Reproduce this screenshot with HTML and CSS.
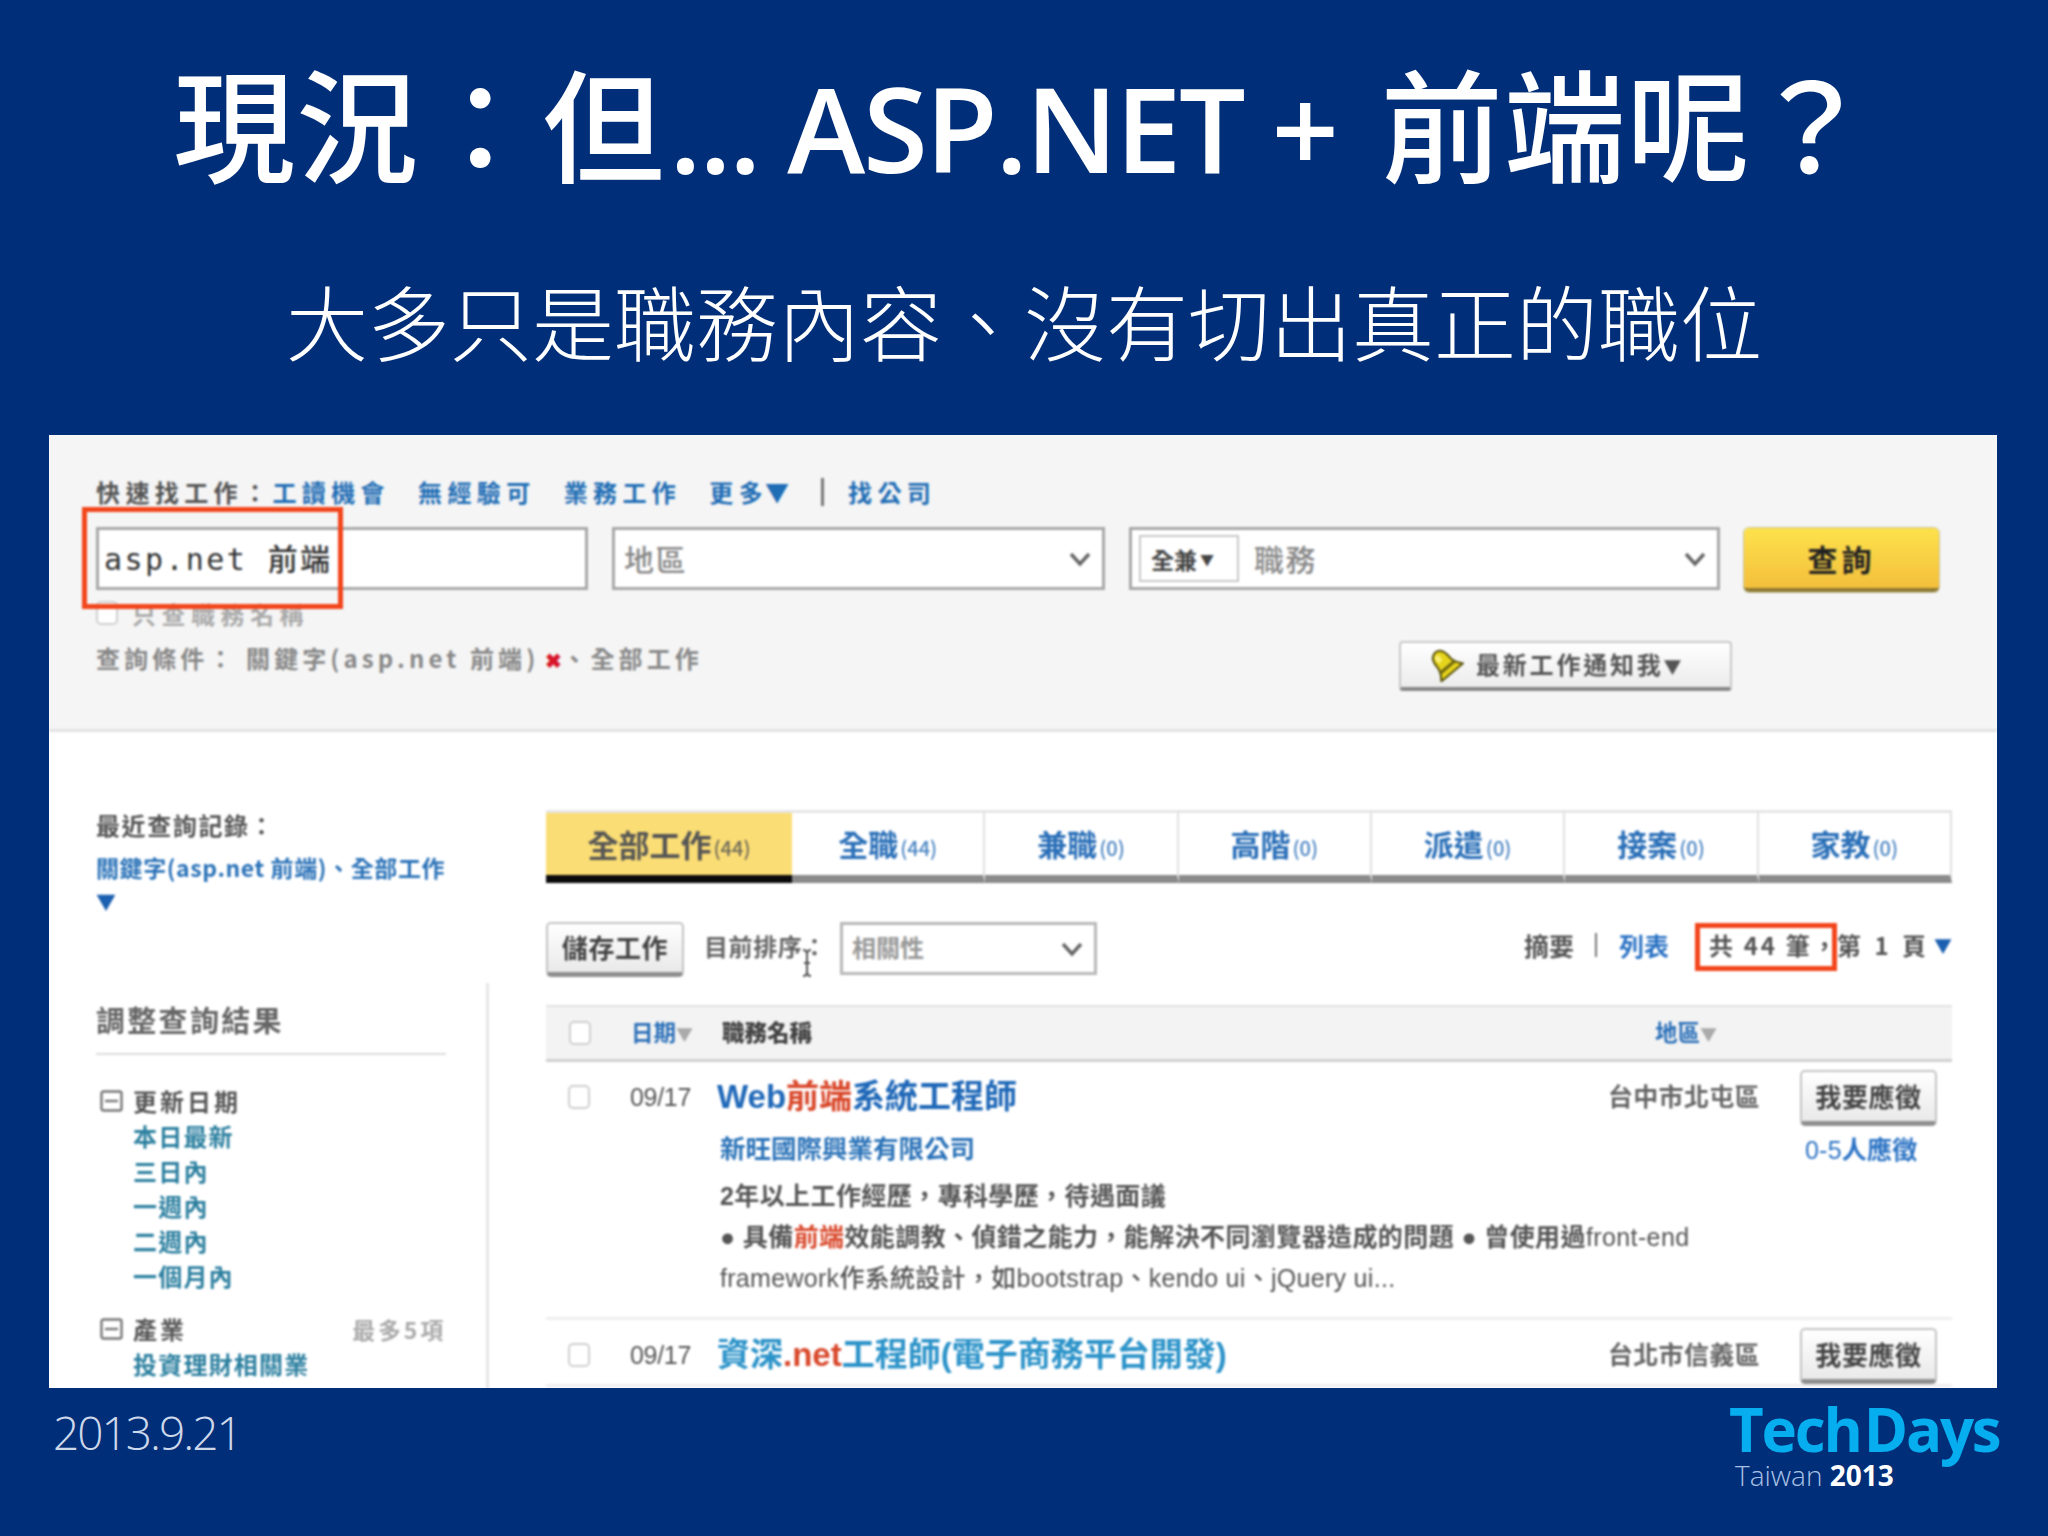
FILE: index.html
```html
<!DOCTYPE html>
<html lang="zh-Hant">
<head>
<meta charset="utf-8">
<title>TechDays Taiwan 2013</title>
<link rel="stylesheet" href="styles.css">
</head>
<body>
<main class="slide">
  <h1 class="title">現況：但<span class="latin">... ASP.NET + </span>前端呢？</h1>
  <h2 class="subtitle">大多只是職務內容、沒有切出真正的職位</h2>

  <section class="panel">
    <div class="shot">
      <header class="search">
        <div class="quick">
          <span>快速找工作：</span><a class="q1">工讀機會</a><a class="q1">無經驗可</a><a class="q1">業務工作</a><a class="q1">更多<em class="qtri">▼</em></a><i class="vbar"></i><a>找公司</a>
        </div>
        <div class="fields">
          <div class="field f1"><span class="typed">asp.net 前端</span><b class="mark mark-a"></b></div>
          <div class="field f2"><span class="ph">地區</span><svg class="chev" viewBox="0 0 24 16"><polyline points="3,3 12,13 21,3"/></svg></div>
          <div class="field f3"><span class="mini">全兼<em>▼</em></span><span class="ph">職務</span><svg class="chev" viewBox="0 0 24 16"><polyline points="3,3 12,13 21,3"/></svg></div>
          <button class="go">查詢</button>
        </div>
        <div class="only"><i class="cb"></i><span>只查職務名稱</span></div>
        <div class="cond">
          <div class="cond-text">查詢條件：&nbsp;關鍵字(asp.net 前端)<b>✖</b>、全部工作</div>
          <button class="notify">
            <svg class="bell" viewBox="0 0 36 34"><g transform="translate(17 16) rotate(-40)"><path d="M0 -15 C-7 -15 -8 -8 -8 -2 C-8 4 -11 7 -14 11 H14 C11 7 8 4 8 -2 C8 -8 7 -15 0 -15Z" fill="#e6d31c" stroke="#59520c" stroke-width="2"/><path d="M-10 4 H10" stroke="#6d6610" stroke-width="3"/><ellipse cx="-2" cy="-8" rx="3" ry="4" fill="#f8ee70"/></g></svg>
            <span>最新工作通知我<em class="tri">▼</em></span>
          </button>
        </div>
      </header>

      <div class="content">
        <aside class="side">
          <div class="recent-t">最近查詢記錄：</div>
          <a class="recent-l">關鍵字(asp.net 前端)、全部工作</a>
          <a class="recent-m">▼</a>
          <div class="filters">
            <div class="f-title">調整查詢結果</div>
            <div class="g-head"><svg class="minus" viewBox="0 0 23 22"><rect x="1.5" y="1.5" width="20" height="19" rx="2"/><line x1="5" y1="11" x2="18" y2="11"/></svg><span>更新日期</span></div>
            <a class="g-item">本日最新</a>
            <a class="g-item">三日內</a>
            <a class="g-item">一週內</a>
            <a class="g-item">二週內</a>
            <a class="g-item">一個月內</a>
            <div class="g-head g2"><svg class="minus" viewBox="0 0 23 22"><rect x="1.5" y="1.5" width="20" height="19" rx="2"/><line x1="5" y1="11" x2="18" y2="11"/></svg><span>產業</span><small>最多5項</small></div>
            <a class="g-item">投資理財相關業</a>
          </div>
        </aside>

        <div class="main">
          <nav class="tabs">
            <div class="tab on">全部工作<small>(44)</small></div>
            <div class="tab">全職<small>(44)</small></div>
            <div class="tab">兼職<small>(0)</small></div>
            <div class="tab">高階<small>(0)</small></div>
            <div class="tab">派遣<small>(0)</small></div>
            <div class="tab">接案<small>(0)</small></div>
            <div class="tab">家教<small>(0)</small></div>
          </nav>

          <div class="tools">
            <button class="btn save">儲存工作</button>
            <span class="sort">目前排序：<svg class="ibeam" viewBox="0 0 12 28"><path d="M2 1 Q6 1 6 5 V23 Q6 27 2 27 M10 1 Q6 1 6 5 M6 23 Q6 27 10 27 M3 14 H9"/></svg></span>
            <div class="sel"><span>相關性</span><svg class="chev" viewBox="0 0 24 16"><polyline points="3,3 12,13 21,3"/></svg></div>
            <div class="pager">
              <span class="sum">摘要</span><i class="vbar thin"></i><a class="sum">列表</a>
              <span class="count">共 44 筆，<b class="mark mark-b"></b></span><span class="page">第 1 頁</span><a class="more">▼</a>
            </div>
          </div>

          <div class="thead">
            <i class="cb"></i>
            <span class="th-date"><a>日期</a><em>▼</em></span>
            <strong class="th-name">職務名稱</strong>
            <span class="th-area"><a>地區</a><em>▼</em></span>
          </div>

          <article class="row first">
            <i class="cb"></i>
            <time class="date">09/17</time>
            <div class="job">
              <a class="job-t">Web<mark>前端</mark>系統工程師</a>
              <a class="co">新旺國際興業有限公司</a>
              <p class="d l1">2年以上工作經歷，專科學歷，待遇面議</p>
              <p class="d l2">● 具備<mark>前端</mark>效能調教、偵錯之能力，能解決不同瀏覽器造成的問題 ● 曾使用過<span class="r">front-end</span></p>
              <p class="d l3">framework作系統設計，如bootstrap、kendo ui、jQuery ui...</p>
            </div>
            <div class="loc">台中市北屯區</div>
            <div class="act"><button class="btn apply">我要應徵</button><a class="cnt"><span class="r">0-5</span>人應徵</a></div>
          </article>

          <article class="row">
            <i class="cb"></i>
            <time class="date">09/17</time>
            <div class="job"><a class="job-t light">資深<mark>.net</mark>工程師(電子商務平台開發)</a></div>
            <div class="loc">台北市信義區</div>
            <div class="act"><button class="btn apply">我要應徵</button></div>
          </article>
        </div>
      </div>
    </div>
  </section>

  <footer class="foot">
    <div class="when">2013.9.21</div>
    <div class="logo">
      <div class="td">Tech<span>Days</span></div>
      <div class="tw">Taiwan <b>2013</b></div>
    </div>
  </footer>
</main>
</body>
</html>
```

FILE: styles.css
```css
* { box-sizing: border-box; }
html, body { margin: 0; padding: 0; }
body { background: #012e78; font-family: "Noto Sans CJK TC", sans-serif; }
a { color: inherit; text-decoration: none; }
i, em { font-style: normal; }
button { font-family: inherit; padding: 0; cursor: default; }

.slide {
  width: 2048px; height: 1536px; overflow: hidden;
  background: #012e78; color: #fff;
  display: flex; flex-direction: column;
}
.title {
  margin: 0; height: 250px; line-height: 252px; text-align: center;
  font-family: "Open Sans", "Noto Sans CJK TC", sans-serif;
  font-weight: 500; font-size: 122px; white-space: nowrap; letter-spacing: 1px;
  padding-right: 2px;
}
.latin { font-weight: 600; font-size: 118px; letter-spacing: -2.4px; margin: 0 16px 0 4px; }
.subtitle {
  margin: 0; height: 185px; line-height: 140px; text-align: center;
  font-weight: 300; font-size: 82px; letter-spacing: 0;
  white-space: nowrap;
}

/* embedded screenshot */
.panel { margin-left: 49px; width: 1948px; height: 953px; overflow: hidden; background: #fff; flex: none; }
.shot { height: 100%; filter: blur(0.9px); color: #333; font-size: 24px; }

.search { height: 297px; background: #f5f5f5; border-bottom: 3px solid #e2e2e2; padding: 41px 0 0 47px; }
.quick { display: flex; height: 32px; line-height: 32px; align-items: center; font-size: 24px; letter-spacing: 5.4px; color: #555; white-space: nowrap; font-weight: 700; }
.quick a { color: #1f6db5; }
.quick .q1 { margin-right: 28px; }
.quick .q1:nth-of-type(4) { margin-right: 32px; }
.qtri { margin-left: -3px; letter-spacing: 0; }
.vbar { display: inline-block; width: 3px; height: 28px; background: #777; margin-right: 24px; }

.fields { display: flex; gap: 24px; margin-top: 19px; }
.field { position: relative; height: 63px; background: #fff; border: 3px solid #a8a8a8; display: flex; align-items: center; }
.f1 { width: 492px; padding-left: 5px; }
.f2 { width: 493px; padding-left: 9px; }
.f3 { width: 591px; padding-left: 7px; }
.typed { font-family: "DejaVu Sans Mono", "Noto Sans CJK TC", monospace; font-size: 30px; color: #333; letter-spacing: 2.4px; white-space: nowrap; font-weight: 500; margin-top: -3px; }
.ph { font-size: 30px; color: #8a8a8a; letter-spacing: 1.5px; font-weight: 500; margin-top: -2px; }
.mini { display: flex; align-items: center; width: 100px; height: 47px; border: 2px solid #c9c9c9; padding-left: 10px; font-size: 23px; font-weight: 700; color: #444; margin-right: 15px; }
.mini em { font-size: 14px; margin-left: 3px; }
.chev { position: absolute; right: 10px; top: 50%; margin-top: -9px; width: 24px; height: 18px; fill: none; stroke: #666; stroke-width: 3.5; }
.go { width: 195px; height: 64px; margin-top: 1px; border: 0; border-bottom: 4px solid #8f7a33; border-radius: 5px; background: linear-gradient(#fde24c, #f4bf3c); box-shadow: 0 0 0 1px #c9c4a6; font-size: 30px; font-weight: 700; color: #222; letter-spacing: 4px; }

.mark { position: absolute; border: 5px solid #f2451b; display: block; }
.mark-a { left: -17px; top: -23px; width: 261px; height: 102px; }
.mark-b { left: -14px; top: -4px; width: 142px; height: 48px; }

.only { display: flex; align-items: center; gap: 14px; height: 30px; margin-top: 6px; color: #aaa; font-size: 24px; letter-spacing: 5.5px; font-weight: 700; }
.cb { display: block; width: 22px; height: 24px; background: #fff; border: 2px solid #cfcfcf; border-radius: 5px; flex: none; }
.cond { display: flex; height: 50px; margin-top: 13px; }
.cond-text { width: 1303px; padding-top: 2px; color: #888; line-height: 30px; font-size: 24px; letter-spacing: 4.1px; white-space: nowrap; font-weight: 700; }
.cond-text b { color: #d8142a; font-size: 20px; margin: 0 0 0 6px; letter-spacing: 0; }
.notify { width: 333px; height: 50px; display: flex; align-items: center; background: linear-gradient(#fff, #ececec); border: 2px solid #c8c8c8; border-bottom: 4px solid #888; border-radius: 4px; padding-left: 27px; font-size: 24px; font-weight: 700; color: #555; letter-spacing: 2.8px; white-space: nowrap; }
.notify span { margin-top: -3px; }
.tri { font-size: 18px; }
.bell { width: 36px; height: 34px; margin-right: 12px; flex: none; }

.content { display: grid; grid-template-columns: 497px 1406px; height: 656px; }
.side { padding: 78px 0 0 47px; }
.recent-t { line-height: 32px; font-size: 24px; color: #555; font-weight: 700; letter-spacing: 1.6px; margin-top: -1px; }
.recent-l { display: block; margin-top: 10px; line-height: 32px; font-size: 23px; color: #2a72b8; white-space: nowrap; font-weight: 700; letter-spacing: 0.6px; }
.recent-m { display: block; margin-top: 3px; line-height: 32px; font-size: 20px; color: #1b5fb0; }
.filters { width: 393px; margin-top: 65px; height: 410px; border-right: 3px solid #e6e6e6; }
.f-title { width: 350px; height: 72px; padding-top: 17px; line-height: 38px; font-size: 29px; letter-spacing: 2.3px; color: #666; border-bottom: 2px solid #dcdcdc; font-weight: 700; }
.g-head { display: flex; align-items: center; width: 350px; height: 35px; margin-top: 28px; font-size: 24px; color: #555; letter-spacing: 3px; font-weight: 700; }
.g-head.g2 { margin-top: 18px; }
.g-head small { margin-left: auto; color: #aaa; font-size: 23px; letter-spacing: 2.8px; }
.minus { width: 23px; height: 22px; margin: 0 10px 0 4px; flex: none; fill: none; stroke: #777; stroke-width: 2.4; }
.g-item { display: block; height: 35px; line-height: 35px; padding-left: 37px; font-size: 24px; letter-spacing: 1.2px; color: #2b7f9f; font-weight: 700; }

.main { padding-top: 78px; }
.tabs { display: flex; height: 73px; }
.tab { flex: 1; display: flex; align-items: center; justify-content: center; font-size: 30px; font-weight: 700; letter-spacing: 0; color: #2a6fb8; background: #fff; border-top: 3px solid #e6e6e6; border-right: 2px solid #e0e0e0; border-bottom: 8px solid #8a8a8a; padding-bottom: 2px; }
.tab small { font-size: 20px; margin: 8px 0 0 2px; opacity: .85; font-weight: 500; }
.tab.on { flex: none; width: 246px; background: #fbdd75; color: #555; border-bottom-color: #0a0a0a; border-right: 0; font-size: 31px; }

.tools { display: flex; align-items: flex-start; height: 55px; margin-top: 39px; }
.btn { background: linear-gradient(#fff, #e9e9e9); border: 2px solid #c4c4c4; border-bottom: 5px solid #8f8f8f; border-radius: 5px; font-size: 26px; letter-spacing: 0.6px; font-weight: 700; color: #444; padding-bottom: 3px; }
.save { width: 138px; height: 55px; }
.sort { position: relative; margin-left: 20px; width: 136px; line-height: 48px; font-size: 24px; color: #666; white-space: nowrap; letter-spacing: 0.6px; font-weight: 700; }
.ibeam { position: absolute; left: 97px; top: 27px; width: 12px; height: 28px; fill: none; stroke: #555; stroke-width: 2; }
.sel { position: relative; width: 257px; height: 53px; background: #fff; border: 3px solid #b8b8b8; padding-left: 9px; line-height: 44px; font-size: 24px; color: #999; font-weight: 700; }
.pager { margin-left: auto; display: flex; align-items: center; height: 45px; font-size: 24px; color: #555; font-weight: 700; }
.pager a { color: #2a72c4; }
.sum { font-size: 25px; }
.vbar.thin { width: 2px; height: 24px; margin: 0 22px 0 21px; background: #777; }
.count { position: relative; margin-left: 40px; width: 128px; letter-spacing: 2.7px; white-space: nowrap; }
.page { width: 97px; letter-spacing: 4px; white-space: nowrap; }
.pager .more { color: #1b5fb0; font-size: 18px; }

.thead { display: flex; align-items: center; height: 57px; margin-top: 28px; background: #f3f3f3; border-top: 2px solid #e2e2e2; border-bottom: 3px solid #d0d0d0; padding: 0 0 4px 23px; font-size: 22.5px; font-weight: 700; }
.thead .cb { margin-top: 4px; }
.th-date { margin-left: 40px; width: 91px; color: #2a6fb8; white-space: nowrap; }
.thead em { color: #aaa; font-size: 17px; font-weight: 400; }
.th-name { color: #444; width: 933px; }
.th-area { color: #2a6fb8; white-space: nowrap; }

.row { display: grid; grid-template-columns: 84px 87px 891px 192px 152px; padding-top: 8px; border-bottom: 3px solid #eeeeee; }
.row.first { height: 258px; }
.row > .cb { margin: 15px 0 0 22px; }
.date { line-height: 54px; font-family: "Liberation Sans", sans-serif; font-size: 25px; color: #555; letter-spacing: -0.3px; }
.job-t { display: block; width: fit-content; line-height: 54px; height: 56px; font-size: 33px; font-weight: 700; color: #1f68b8; white-space: nowrap; letter-spacing: 0; font-family: "Liberation Sans", "Noto Sans CJK TC", sans-serif; }
.job-t.light { color: #2c93c9; }
mark { background: none; color: #d9482b; }
.co { display: block; width: fit-content; margin-top: 4px; padding-left: 3px; line-height: 34px; font-size: 25.5px; color: #2a72b8; font-weight: 700; }
.d { margin: 0; width: fit-content; padding-left: 3px; height: 41px; line-height: 41px; font-family: "Liberation Sans", "Noto Sans CJK TC", sans-serif; font-size: 25px; color: #555; white-space: nowrap; font-weight: 700; letter-spacing: 0.4px; }
.l1 { margin-top: 12px; }
.l2 { letter-spacing: 0.4px; }
.l3 { font-weight: 500; letter-spacing: 0.3px; }
.r { font-weight: 400; }
.loc { line-height: 51px; font-size: 25px; color: #666; letter-spacing: 0.3px; font-weight: 700; white-space: nowrap; }
.apply { display: block; width: 137px; height: 56px; }
.cnt { display: block; width: fit-content; margin: 7px 0 0 5px; line-height: 34px; font-size: 25px; color: #2a72c4; white-space: nowrap; font-family: "Liberation Sans", "Noto Sans CJK TC", sans-serif; letter-spacing: 0.2px; font-weight: 700; }

.foot { flex: 1; display: flex; justify-content: space-between; align-items: flex-start; padding-left: 53px; padding-right: 47px; }
.when { margin-top: 12px; font-family: "Open Sans", sans-serif; font-weight: 300; font-size: 46px; line-height: 64px; color: #cdd8ea; letter-spacing: -2px; }
.logo { font-family: "Open Sans", sans-serif; width: 272px; }
.td { margin-top: 8px; height: 66px; line-height: 66px; font-size: 60px; font-weight: 700; color: #06aeef; letter-spacing: -2.2px; white-space: nowrap; }
.td span { margin-left: 3px; }
.tw { margin-top: -5px; padding-left: 6px; line-height: 36px; font-size: 28px; font-weight: 300; color: #a9c1e4; white-space: nowrap; }
.tw b { font-weight: 700; color: #fff; }
```
